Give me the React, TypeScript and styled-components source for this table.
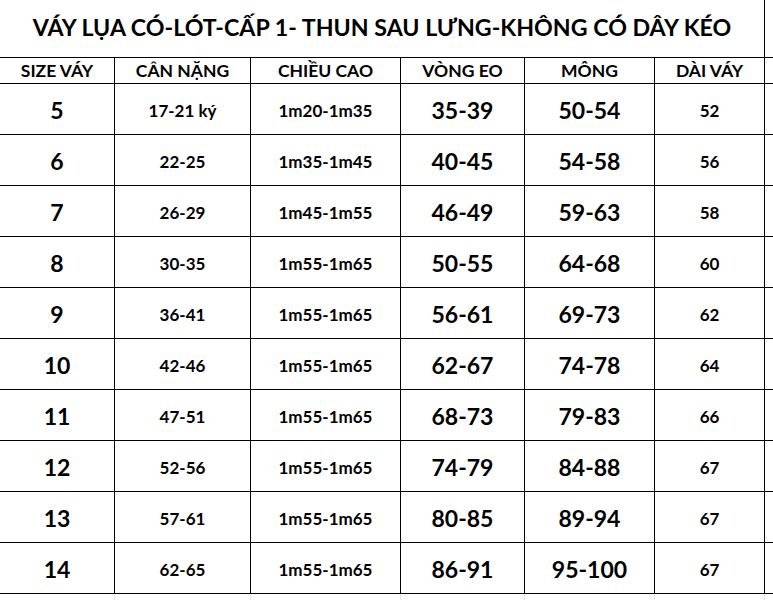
import React from 'react';
import styled, { createGlobalStyle } from 'styled-components';

const GlobalStyle = createGlobalStyle`
  html, body {
    margin: 0;
    padding: 0;
    background: #ffffff;
    overflow: hidden;
  }
  body {
    font-family: Lato, 'Open Sans', 'Noto Sans', sans-serif;
    color: #000;
  }
`;

const Page = styled.div`
  width: 773px;
  height: 600px;
  overflow: hidden;
  background: #fff;
`;

// bảng kẻ ô: nền đen + gap 1px tạo đường kẻ
const Grid = styled.div`
  display: grid;
  grid-template-columns: 114px 135px 149px 123px 129px 109px 1fr;
  grid-template-rows: 57px 25px repeat(10, 50px);
  gap: 1px;
  background: #000;
  padding-bottom: 1px;
`;

const Cell = styled.div<{ $size?: number; $span?: number }>`
  background: #fff;
  display: flex;
  align-items: center;
  justify-content: center;
  font-weight: 700;
  font-size: ${(p) => p.$size ?? 16}px;
  line-height: 1;
  white-space: nowrap;
  grid-column: ${(p) => (p.$span ? `span ${p.$span}` : 'auto')};
`;

const Title = styled(Cell)`
  font-size: 23.2px;
  padding-bottom: 1px;
`;

const HeadCell = styled(Cell)`
  font-size: 17.5px;
  padding-top: 1px;
`;

const DataCell = styled(Cell)`
  padding-top: 3px;
`;

const Spare = styled.div`
  background: #fff;
`;

const GhostRow = styled.div`
  display: grid;
  grid-template-columns: 114px 135px 149px 123px 129px 109px 1fr;
  gap: 1px;
  height: 6px;
  background: #e3e3e3;
`;

const GhostCell = styled.div`
  background: #fff;
`;

const headers = ['SIZE VÁY', 'CÂN NẶNG', 'CHIỀU CAO', 'VÒNG EO', 'MÔNG', 'DÀI VÁY'];

const rows = [
  ['5', '17-21 ký', '1m20-1m35', '35-39', '50-54', '52'],
  ['6', '22-25', '1m35-1m45', '40-45', '54-58', '56'],
  ['7', '26-29', '1m45-1m55', '46-49', '59-63', '58'],
  ['8', '30-35', '1m55-1m65', '50-55', '64-68', '60'],
  ['9', '36-41', '1m55-1m65', '56-61', '69-73', '62'],
  ['10', '42-46', '1m55-1m65', '62-67', '74-78', '64'],
  ['11', '47-51', '1m55-1m65', '68-73', '79-83', '66'],
  ['12', '52-56', '1m55-1m65', '74-79', '84-88', '67'],
  ['13', '57-61', '1m55-1m65', '80-85', '89-94', '67'],
  ['14', '62-65', '1m55-1m65', '86-91', '95-100', '67'],
];

// cỡ chữ từng cột
const colSizes = [23, 17, 17, 23, 23, 17];

const App = () => {
  return (
    <Page>
      <GlobalStyle />
      <Grid>
        <Title $span={6}>VÁY LỤA CÓ-LÓT-CẤP 1- THUN SAU LƯNG-KHÔNG CÓ DÂY KÉO</Title>
        <Spare />
        {headers.map((h) => (
          <HeadCell key={h}>{h}</HeadCell>
        ))}
        <Spare />
        {rows.map((row, r) => (
          <React.Fragment key={r}>
            {row.map((v, c) => (
              <DataCell key={c} $size={colSizes[c]}>
                {v}
              </DataCell>
            ))}
            <Spare />
          </React.Fragment>
        ))}
      </Grid>
      <GhostRow>
        {Array.from({ length: 7 }).map((_, i) => (
          <GhostCell key={i} />
        ))}
      </GhostRow>
    </Page>
  );
};

export default App;
